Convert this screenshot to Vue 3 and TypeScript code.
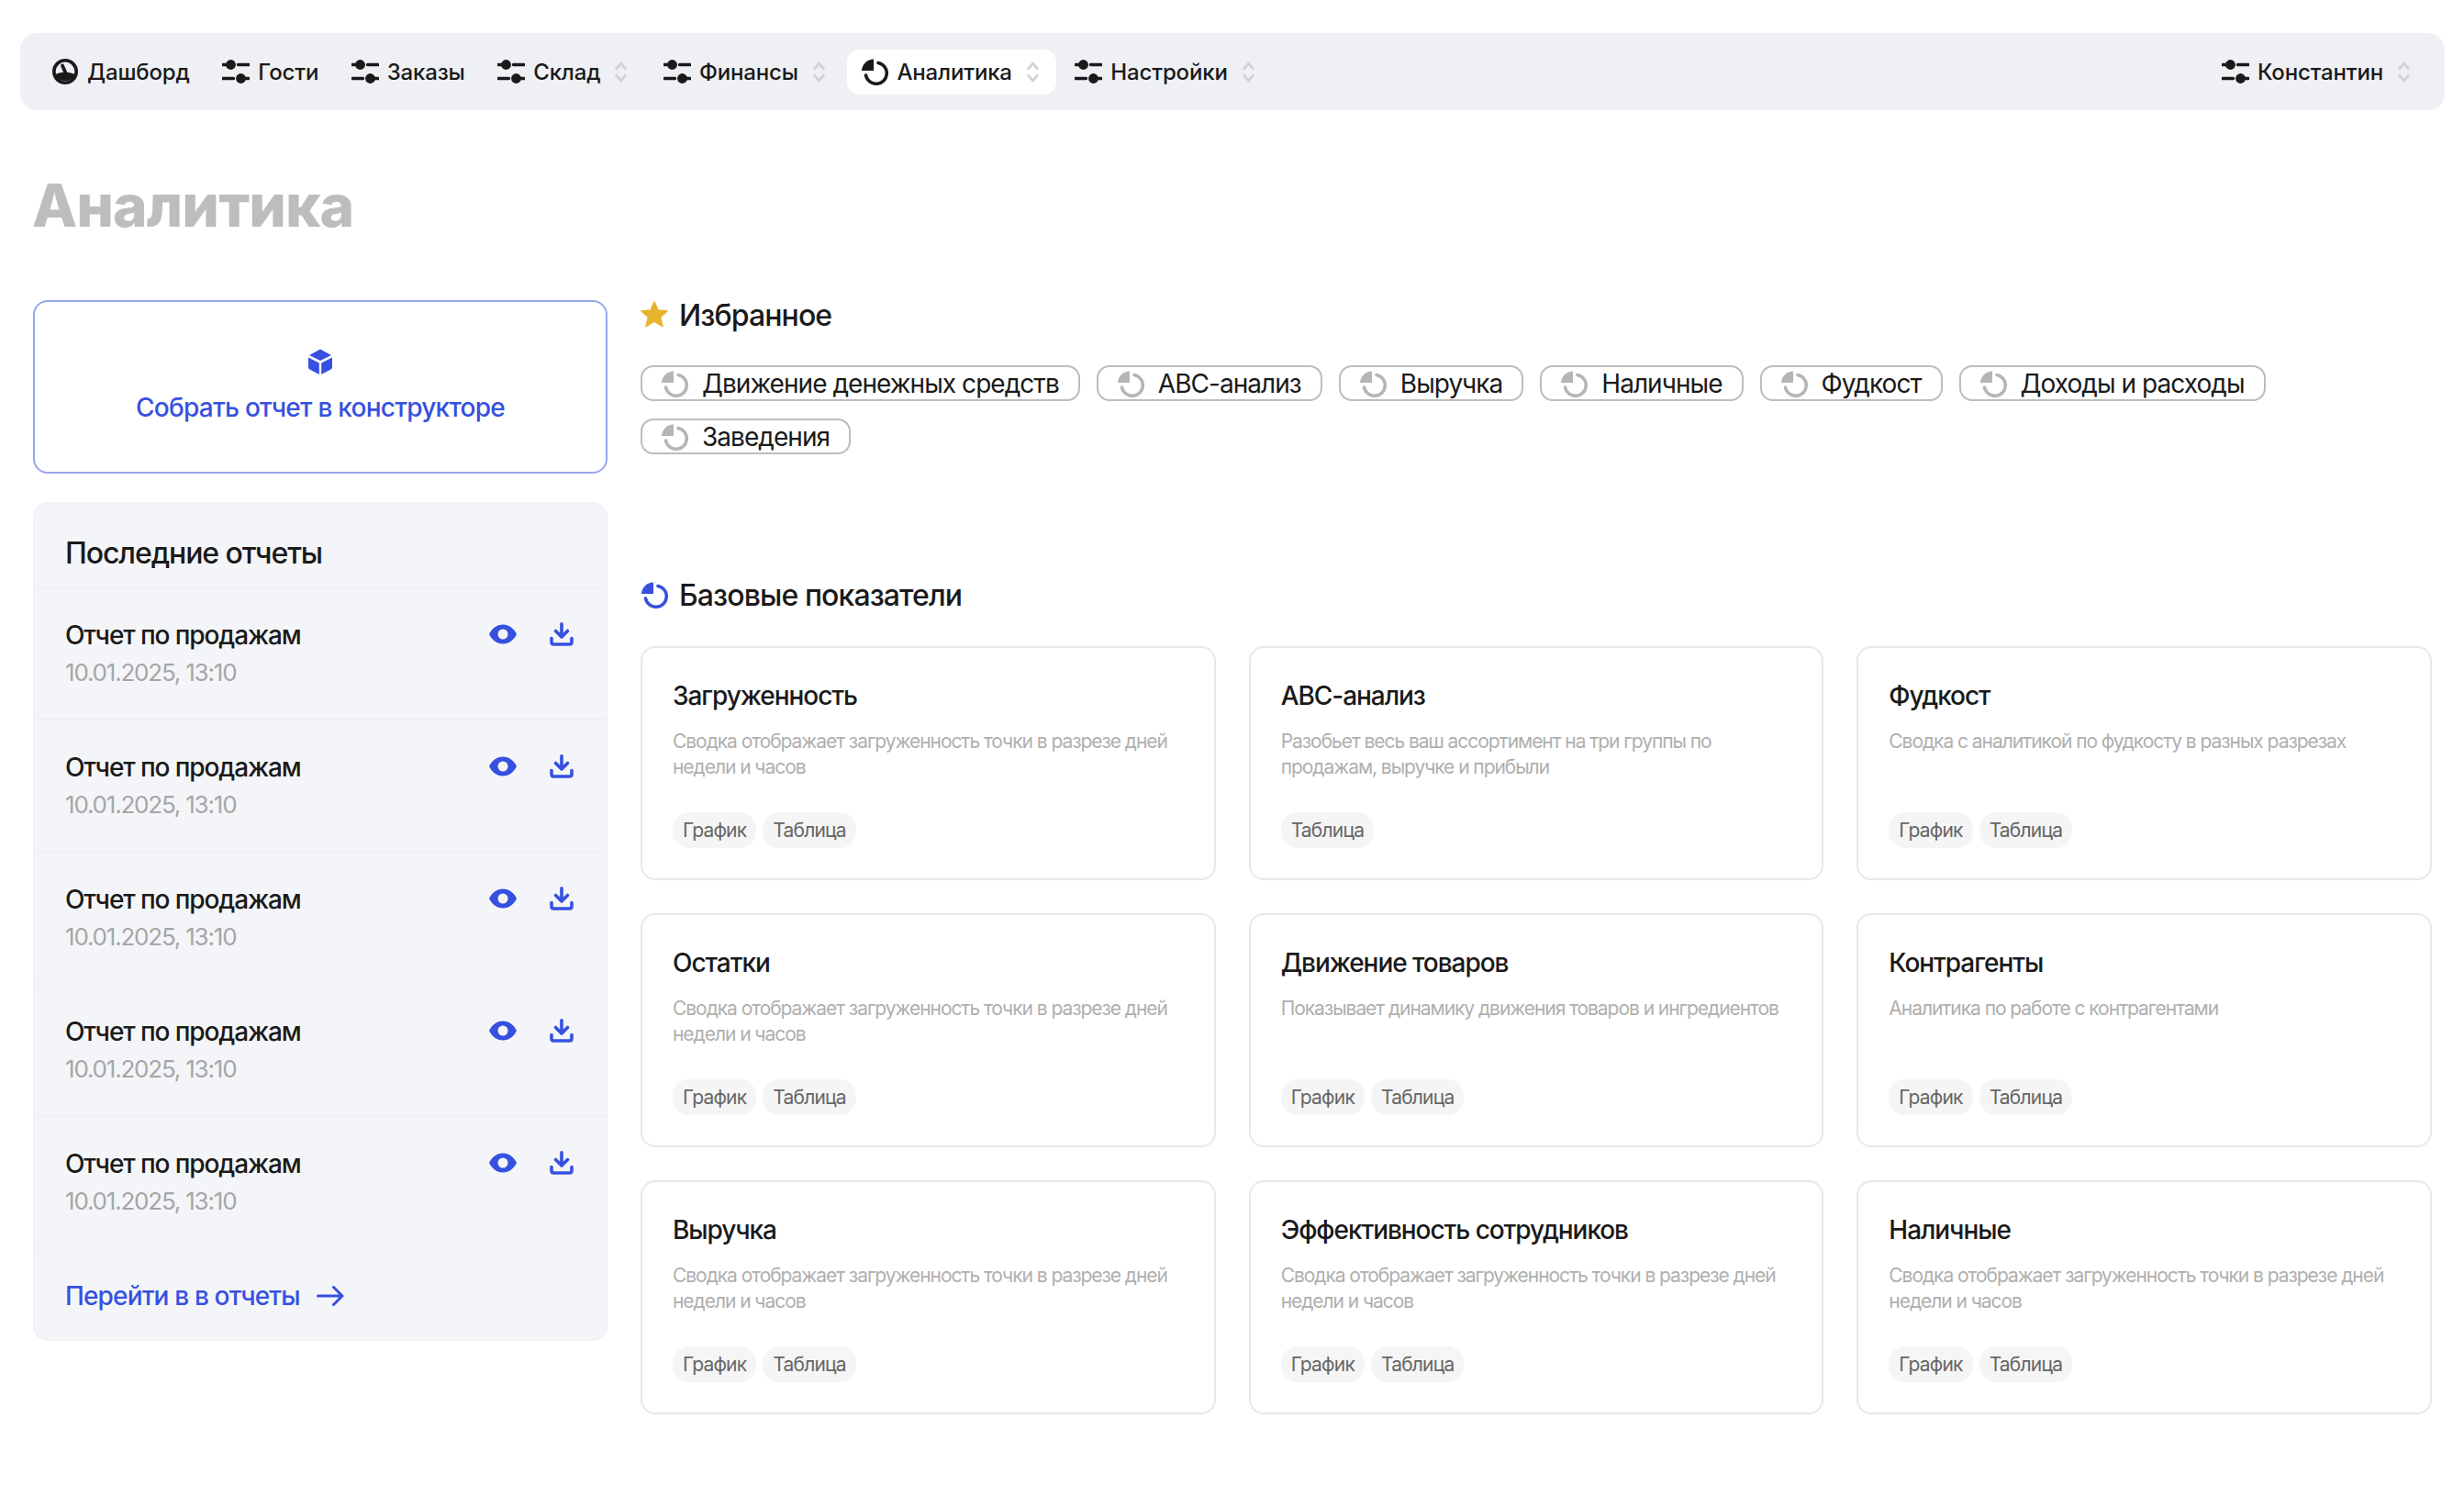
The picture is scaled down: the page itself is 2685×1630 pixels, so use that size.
<script setup lang="ts">
// Страница аналитики: верхнее меню, последние отчеты, избранное и базовые показатели
interface NavItem {
  label: string
  icon: 'dash' | 'sliders' | 'pie'
  chevron?: boolean
  active?: boolean
  user?: boolean
}

interface ReportCard {
  title: string
  desc: string
  tags: string[]
}

const navItems: NavItem[] = [
  { label: 'Дашборд', icon: 'dash' },
  { label: 'Гости', icon: 'sliders' },
  { label: 'Заказы', icon: 'sliders' },
  { label: 'Склад', icon: 'sliders', chevron: true },
  { label: 'Финансы', icon: 'sliders', chevron: true },
  { label: 'Аналитика', icon: 'pie', chevron: true, active: true },
  { label: 'Настройки', icon: 'sliders', chevron: true },
  { label: 'Константин', icon: 'sliders', chevron: true, user: true },
]

const favorites = [
  'Движение денежных средств',
  'ABC-анализ',
  'Выручка',
  'Наличные',
  'Фудкост',
  'Доходы и расходы',
  'Заведения',
]

const recentReports = Array.from({ length: 5 }, () => ({
  name: 'Отчет по продажам',
  date: '10.01.2025, 13:10',
}))

const loadDesc = 'Сводка отображает загруженность точки в разрезе дней недели и часов'
const both = ['График', 'Таблица']

const cards: ReportCard[] = [
  { title: 'Загруженность', desc: loadDesc, tags: both },
  { title: 'ABC-анализ', desc: 'Разобьет весь ваш ассортимент на три группы по продажам, выручке и прибыли', tags: ['Таблица'] },
  { title: 'Фудкост', desc: 'Сводка с аналитикой по фудкосту в разных разрезах', tags: both },
  { title: 'Остатки', desc: loadDesc, tags: both },
  { title: 'Движение товаров', desc: 'Показывает динамику движения товаров и ингредиентов', tags: both },
  { title: 'Контрагенты', desc: 'Аналитика по работе с контрагентами', tags: both },
  { title: 'Выручка', desc: loadDesc, tags: both },
  { title: 'Эффективность сотрудников', desc: loadDesc, tags: both },
  { title: 'Наличные', desc: loadDesc, tags: both },
]
</script>

<template>
  <div class="page">
    <nav class="nav">
      <div
        v-for="item in navItems"
        :key="item.label"
        class="nav-item"
        :class="{ active: item.active, user: item.user, 'has-chev': item.chevron }"
      >
        <svg v-if="item.icon === 'dash'" class="nav-icon" viewBox="0 0 30 30">
          <circle cx="15" cy="15" r="12.2" fill="none" stroke="#1a1a1a" stroke-width="3.6" />
          <path d="M4 18 Q15 13 26 18 A12 12 0 0 1 4 18 Z" fill="#1a1a1a" />
          <path d="M12 8.5 L17 20" stroke="#1a1a1a" stroke-width="3.8" stroke-linecap="round" />
        </svg>
        <svg v-else-if="item.icon === 'sliders'" class="nav-icon" viewBox="0 0 30 30">
          <path d="M1 7.5 H6 M17.5 7.5 H29 M1 22.5 H12.5 M24 22.5 H29" stroke="#1a1a1a" stroke-width="3.4" stroke-linecap="round" />
          <circle cx="9.5" cy="7.5" r="5.4" fill="#1a1a1a" />
          <circle cx="20.5" cy="22.5" r="5.4" fill="#1a1a1a" />
        </svg>
        <svg v-else class="nav-icon" viewBox="0 0 30 30">
          <path d="M14 1.5 V14 H1 A13 13 0 0 1 14 1.5 Z" fill="#1a1a1a" />
          <path d="M19 5.5 A11.5 11.5 0 1 1 5.5 19" fill="none" stroke="#1a1a1a" stroke-width="3.6" stroke-linecap="round" />
        </svg>
        <span>{{ item.label }}</span>
        <svg v-if="item.chevron" class="chev" viewBox="0 0 16 26">
          <path d="M2 10 L8 3 L14 10 M2 16 L8 23 L14 16" fill="none" stroke="#d2d2d2" stroke-width="3" />
        </svg>
      </div>
    </nav>

    <h1 class="page-title">Аналитика</h1>

    <div class="columns">
      <aside class="side">
        <button class="builder">
          <svg class="cube" viewBox="0 0 26 28">
            <path d="M13 0.5 L25 7 L13 13 L1 7 Z" fill="#3651e0" />
            <path d="M0 9.5 L11.8 15.5 V28 L1.5 22.5 Q0 21.6 0 20 Z" fill="#3651e0" />
            <path d="M26 9.5 L14.2 15.5 V28 L24.5 22.5 Q26 21.6 26 20 Z" fill="#3651e0" />
          </svg>
          <span>Собрать отчет в конструкторе</span>
        </button>

        <section class="recent">
          <h3 class="recent-title">Последние отчеты</h3>
          <div v-for="(report, i) in recentReports" :key="i" class="recent-row">
            <div class="recent-text">
              <div class="recent-name">{{ report.name }}</div>
              <div class="recent-date">{{ report.date }}</div>
            </div>
            <svg class="eye" viewBox="0 0 30 22">
              <path fill-rule="evenodd" d="M15 0.5 C22 0.5 27 5 30 11 C27 17 22 21.5 15 21.5 C8 21.5 3 17 0 11 C3 5 8 0.5 15 0.5 Z M15 5.5 A5.5 5.5 0 1 0 15 16.5 A5.5 5.5 0 1 0 15 5.5 Z" fill="#3651e0" />
            </svg>
            <svg class="download" viewBox="0 0 26 26">
              <path d="M13 1.8 V15.5 M6.5 9.5 L13 16 L19.5 9.5" fill="none" stroke="#3651e0" stroke-width="3.6" stroke-linecap="round" stroke-linejoin="round" />
              <path d="M2 17.5 V21.5 Q2 24 4.5 24 H21.5 Q24 24 24 21.5 V17.5" fill="none" stroke="#3651e0" stroke-width="3.6" stroke-linecap="round" />
            </svg>
          </div>
          <a class="recent-link">
            <span>Перейти в в отчеты</span>
            <svg class="arrow" viewBox="0 0 30 22">
              <path d="M1.5 11 H28 M18.5 1.5 L28 11 L18.5 20.5" fill="none" stroke="#3651e0" stroke-width="3" stroke-linecap="round" stroke-linejoin="round" />
            </svg>
          </a>
        </section>
      </aside>

      <main class="content">
        <h2 class="section-title fav-title">
          <svg class="section-icon" viewBox="0 0 30 30">
            <path d="M15 1 L19 10 L29 11 L21.5 17.5 L24 27.5 L15 22 L6 27.5 L8.5 17.5 L1 11 L11 10 Z" fill="#e8b32e" stroke="#e8b32e" stroke-width="1.5" stroke-linejoin="round" />
          </svg>
          Избранное
        </h2>
        <div class="chips">
          <div v-for="fav in favorites" :key="fav" class="chip">
            <svg class="chip-icon" viewBox="0 0 30 30">
              <path d="M14 1.5 V14 H1 A13 13 0 0 1 14 1.5 Z" fill="#b5b5b5" />
              <path d="M19 5.5 A11.5 11.5 0 1 1 5.5 19" fill="none" stroke="#b5b5b5" stroke-width="3.6" stroke-linecap="round" />
            </svg>
            <span>{{ fav }}</span>
          </div>
        </div>

        <h2 class="section-title base-title">
          <svg class="section-icon" viewBox="0 0 30 30">
            <path d="M14 1.5 V14 H1 A13 13 0 0 1 14 1.5 Z" fill="#3651e0" />
            <path d="M19 5.5 A11.5 11.5 0 1 1 5.5 19" fill="none" stroke="#3651e0" stroke-width="3.6" stroke-linecap="round" />
          </svg>
          Базовые показатели
        </h2>
        <div class="cards">
          <article v-for="card in cards" :key="card.title" class="card">
            <h4 class="card-title">{{ card.title }}</h4>
            <p class="card-desc">{{ card.desc }}</p>
            <div class="card-tags">
              <span v-for="tag in card.tags" :key="tag" class="tag">{{ tag }}</span>
            </div>
          </article>
        </div>
      </main>
    </div>
  </div>
</template>

<style>
body {
  margin: 0;
  background: #fff;
}
</style>

<style scoped>
.page {
  width: 2685px;
  height: 1630px;
  box-sizing: border-box;
  padding: 36px 21px 0 22px;
  font-family: Inter, "Noto Sans", "Liberation Sans", sans-serif;
  color: #1a1a1a;
  overflow: hidden;
}

.nav {
  display: flex;
  align-items: center;
  gap: 5.5px;
  height: 84px;
  box-sizing: border-box;
  padding: 0 19px 0 19px;
  background: #eef0f4;
  border-radius: 18px;
}

.nav-item {
  display: flex;
  align-items: center;
  height: 49px;
  padding: 0 15px;
  border-radius: 14px;
  font-size: 24px;
  font-weight: 500;
  letter-spacing: -0.15px;
}

.nav-item.has-chev {
  padding-right: 18px;
}

.nav-item.active {
  background: #fff;
}

.nav-item.user {
  margin-left: auto;
}

.nav-icon {
  width: 30px;
  height: 30px;
  margin-right: 9px;
}

.chev {
  width: 15px;
  height: 25px;
  margin-left: 15px;
}

.page-title {
  margin: 65px 0 0 13px;
  font-size: 64px;
  line-height: 78px;
  font-weight: 800;
  letter-spacing: -0.9px;
  color: #bdbdbd;
}

.columns {
  display: flex;
  gap: 36px;
  margin: 64px 14px 0 14px;
}

.side {
  flex: 0 0 626px;
}

.builder {
  display: flex;
  flex-direction: column;
  align-items: center;
  width: 100%;
  height: 189px;
  padding: 51px 0 0;
  background: #fff;
  border: 2px solid #98a6ee;
  border-radius: 16px;
  font-family: inherit;
  font-size: 28px;
  font-weight: 500;
  letter-spacing: -0.75px;
  color: #3651e0;
}

.cube {
  width: 26px;
  height: 28px;
  margin-bottom: 19px;
}

.recent {
  margin-top: 31px;
  background: #f4f5f8;
  border: 2px solid #f1f2f5;
  border-radius: 16px;
  box-sizing: border-box;
}

.recent-title {
  margin: 0;
  height: 90px;
  box-sizing: border-box;
  padding: 34px 33px 0;
  font-size: 32px;
  line-height: 40px;
  font-weight: 500;
  letter-spacing: -1.1px;
}

.recent-row {
  display: flex;
  align-items: flex-start;
  height: 144px;
  box-sizing: border-box;
  padding: 34px 35px 0 33px;
  border-top: 2px solid #eff0f3;
}

.recent-text {
  flex: 1;
}

.recent-name {
  font-size: 28px;
  line-height: 34px;
  font-weight: 500;
  letter-spacing: -1.1px;
}

.recent-date {
  margin-top: 7px;
  font-size: 26px;
  line-height: 34px;
  color: #a6a6a6;
  letter-spacing: -1.2px;
}

.eye {
  width: 30px;
  height: 22px;
  margin: 5px 36px 0 0;
}

.download {
  width: 26px;
  height: 26px;
  margin-top: 3px;
}

.recent-link {
  display: flex;
  align-items: center;
  height: 100px;
  box-sizing: border-box;
  padding: 3px 33px 0;
  border-top: 2px solid #eff0f3;
  font-size: 28px;
  font-weight: 500;
  letter-spacing: -0.85px;
  color: #3651e0;
}

.arrow {
  width: 30px;
  height: 22px;
  margin-left: 18px;
}

.content {
  flex: 1;
  min-width: 0;
}

.section-title {
  display: flex;
  align-items: center;
  gap: 12px;
  margin: 0;
  height: 40px;
  font-size: 32px;
  font-weight: 500;
  letter-spacing: -0.9px;
}

.fav-title {
  height: 32px;
}

.section-icon {
  width: 30px;
  height: 30px;
}

.chips {
  display: flex;
  flex-wrap: wrap;
  gap: 19px 18px;
  margin-top: 39px;
}

.chip {
  display: flex;
  align-items: center;
  height: 39px;
  box-sizing: border-box;
  padding: 0 21px 0 20px;
  border: 2px solid #bdbdbd;
  border-radius: 14px;
  font-size: 28px;
  letter-spacing: -0.95px;
}

.chip-icon {
  width: 30px;
  height: 30px;
  margin-right: 15px;
}

.base-title {
  margin-top: 133px;
}

.cards {
  display: grid;
  grid-template-columns: repeat(3, 1fr);
  gap: 36px;
  margin-top: 36px;
}

.card {
  height: 255px;
  box-sizing: border-box;
  padding: 34px 33px 0;
  border: 2px solid #e8e8e8;
  border-radius: 16px;
  display: flex;
  flex-direction: column;
}

.card-title {
  margin: 0;
  font-size: 28px;
  line-height: 36px;
  font-weight: 500;
  letter-spacing: -1.05px;
}

.card-desc {
  margin: 18px 0 0;
  height: 56px;
  font-size: 21px;
  line-height: 28px;
  color: #afafaf;
  letter-spacing: -1.05px;
}

.card-tags {
  display: flex;
  gap: 7px;
  margin-top: 35px;
}

.tag {
  display: flex;
  align-items: center;
  height: 39px;
  padding: 0 11px;
  border-radius: 18px;
  background: #f5f5f5;
  font-size: 21px;
  color: #666;
  letter-spacing: -0.8px;
}
</style>
